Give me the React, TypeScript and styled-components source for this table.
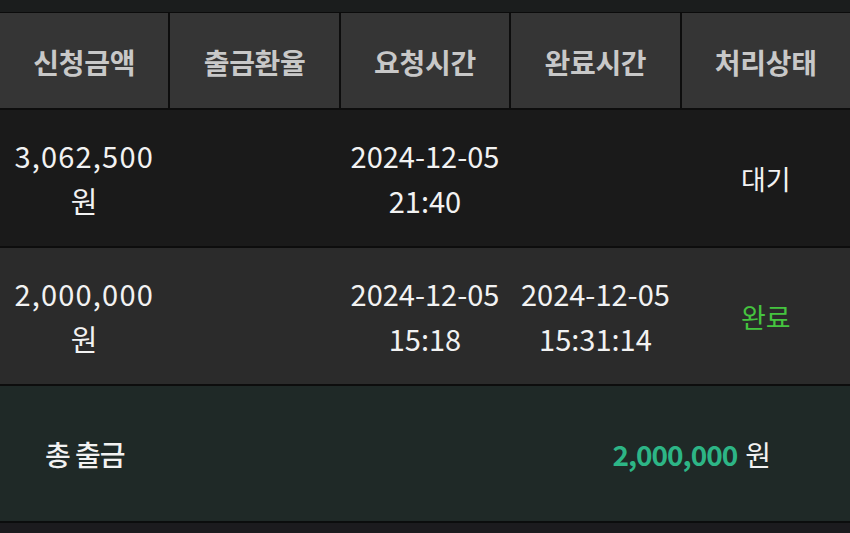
import React from "react";
import styled, { createGlobalStyle } from "styled-components";

const Global = createGlobalStyle`
  html, body { margin: 0; padding: 0; background: #1b1c1e; }
  body { font-family: "Noto Sans CJK KR", "Noto Sans", sans-serif; }
`;

const Page = styled.div`
  width: 850px;
  height: 533px;
  background: #1b1c1e;
  display: flex;
  flex-direction: column;
  overflow: hidden;
`;

const TopBand = styled.div`
  height: 12px;
  background: #1b1d1d;
  border-bottom: 1px solid #0b0b0b;
`;

const HeaderRow = styled.div`
  display: grid;
  grid-template-columns: repeat(5, 1fr);
  column-gap: 2px;
  background: #0d0d0d;
  height: 95px;
  border-bottom: 2px solid #0d0d0d;
`;

const HeaderCell = styled.div`
  background: #353535;
  color: #c8c8c8;
  font-size: 28px;
  font-weight: 700;
  letter-spacing: -0.3px;
  padding-top: 3px;
  display: flex;
  align-items: center;
  justify-content: center;
`;

const Row = styled.div<{ $bg: string }>`
  display: grid;
  grid-template-columns: repeat(5, 1fr);
  column-gap: 2px;
  height: 136px;
  background: ${(p) => p.$bg};
  border-bottom: 2px solid #0d0d0d;
`;

const Cell = styled.div<{ $color?: string; $size?: number }>`
  color: ${(p) => p.$color || "#f2f2f2"};
  font-size: ${(p) => p.$size || 29}px;
  line-height: 45px;
  text-align: center;
  display: flex;
  flex-direction: column;
  align-items: center;
  justify-content: center;
`;

const Amount = styled.span`
  letter-spacing: 1.2px;
`;

const Footer = styled.div`
  height: 135px;
  background: #1f2927;
  border-bottom: 2px solid #0b0d0d;
  display: flex;
  align-items: center;
  justify-content: space-between;
  padding: 0 79px 0 45px;
`;

const FooterLabel = styled.div`
  color: #f2f2f2;
  font-size: 28px;
  font-weight: 500;
  letter-spacing: -1px;
`;

const FooterAmount = styled.div`
  color: #f2f2f2;
  font-size: 28px;
  display: flex;
  align-items: baseline;
  gap: 8px;
`;

const Green = styled.span`
  color: #2db586;
  font-weight: 700;
  letter-spacing: -1px;
`;

const BottomBand = styled.div`
  flex: 1;
  background: #1b1b1e;
`;

const headers = ["신청금액", "출금환율", "요청시간", "완료시간", "처리상태"];

type RowData = {
  amount: string;
  req: [string, string];
  done?: [string, string];
  status: string;
  statusColor: string;
  bg: string;
};

const rows: RowData[] = [
  {
    amount: "3,062,500",
    req: ["2024-12-05", "21:40"],
    status: "대기",
    statusColor: "#f2f2f2",
    bg: "#1a1a1a",
  },
  {
    amount: "2,000,000",
    req: ["2024-12-05", "15:18"],
    done: ["2024-12-05", "15:31:14"],
    status: "완료",
    statusColor: "#45c43f",
    bg: "#2b2b2b",
  },
];

export default function App() {
  return (
    <Page>
      <Global />
      <TopBand />
      <HeaderRow>
        {headers.map((h) => (
          <HeaderCell key={h}>{h}</HeaderCell>
        ))}
      </HeaderRow>
      {rows.map((r, i) => (
        <Row key={i} $bg={r.bg}>
          <Cell>
            <Amount>{r.amount}</Amount>
            <span>원</span>
          </Cell>
          <Cell />
          <Cell>
            <span>{r.req[0]}</span>
            <span>{r.req[1]}</span>
          </Cell>
          <Cell>
            {r.done && (
              <>
                <span>{r.done[0]}</span>
                <span>{r.done[1]}</span>
              </>
            )}
          </Cell>
          <Cell $color={r.statusColor} $size={27}>
            {r.status}
          </Cell>
        </Row>
      ))}
      <Footer>
        <FooterLabel>총 출금</FooterLabel>
        <FooterAmount>
          <Green>2,000,000</Green>
          <span>원</span>
        </FooterAmount>
      </Footer>
      <BottomBand />
    </Page>
  );
}
